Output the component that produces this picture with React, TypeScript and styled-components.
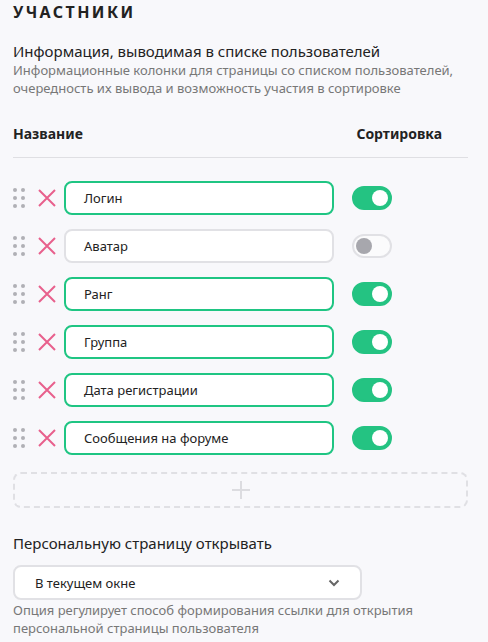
import React, { useState } from 'react'
import styled, { createGlobalStyle } from 'styled-components'

const GlobalStyle = createGlobalStyle`
  html, body {
    margin: 0;
    padding: 0;
    background: #f8f8fb;
  }
  body {
    font-family: "Noto Sans", "Open Sans", sans-serif;
    color: #222;
  }
`

type Field = { name: string; sortable: boolean }

const initialFields: Field[] = [
  { name: 'Логин', sortable: true },
  { name: 'Аватар', sortable: false },
  { name: 'Ранг', sortable: true },
  { name: 'Группа', sortable: true },
  { name: 'Дата регистрации', sortable: true },
  { name: 'Сообщения на форуме', sortable: true },
]

export default function App() {
  const [fields, setFields] = useState(initialFields)

  const toggle = (i: number) =>
    setFields(f => f.map((x, j) => (j === i ? { ...x, sortable: !x.sortable } : x)))

  return (
    <>
      <GlobalStyle />
      <Page>
        <Title>Участники</Title>

        <SectionTitle>Информация, выводимая в списке пользователей</SectionTitle>
        <Hint>
          Информационные колонки для страницы со списком пользователей,
          <br />
          очередность их вывода и возможность участия в сортировке
        </Hint>

        <TableHead>
          <span>Название</span>
          <span>Сортировка</span>
        </TableHead>

        <Rows>
          {fields.map((f, i) => (
            <Row key={f.name}>
              <Handle>
                {Array.from({ length: 6 }).map((_, k) => (
                  <Dot key={k} />
                ))}
              </Handle>
              <RemoveButton aria-label="Удалить">
                <svg width="20" height="20" viewBox="0 0 20 20">
                  <path d="M2 2 L18 18 M18 2 L2 18" stroke="#e8608c" strokeWidth="2" />
                </svg>
              </RemoveButton>
              <NameBox $active={f.sortable}>{f.name}</NameBox>
              <Switch $on={f.sortable} onClick={() => toggle(i)}>
                <Knob $on={f.sortable} />
              </Switch>
            </Row>
          ))}
        </Rows>

        <AddButton aria-label="Добавить">
          <svg width="20" height="20" viewBox="0 0 20 20">
            <path d="M10 1 V19 M1 10 H19" stroke="#dcdce0" strokeWidth="2" />
          </svg>
        </AddButton>

        <Label>Персональную страницу открывать</Label>
        <Select>
          <span>В текущем окне</span>
          <svg width="12" height="8" viewBox="0 0 12 8">
            <path d="M1.5 1.5 L6 6 L10.5 1.5" stroke="#666" strokeWidth="2" fill="none" />
          </svg>
        </Select>
        <Help>
          Опция регулирует способ формирования ссылки для открытия
          <br />
          персональной страницы пользователя
        </Help>
      </Page>
    </>
  )
}

const Page = styled.div`
  width: 455px;
  padding: 0 20px 0 13px;
`

const Title = styled.div`
  font-size: 16px;
  font-weight: 700;
  text-transform: uppercase;
  letter-spacing: 2.4px;
  line-height: 24px;
  color: #222;
`

const SectionTitle = styled.div`
  margin-top: 17px;
  font-size: 15px;
  line-height: 20px;
  color: #222;
`

const Hint = styled.div`
  font-size: 13px;
  line-height: 18px;
  color: #777;
`

const TableHead = styled.div`
  display: flex;
  justify-content: space-between;
  margin-top: 27px;
  padding-bottom: 13px;
  padding-right: 26px;
  border-bottom: 1px solid #dfdfe3;
  font-size: 14px;
  font-weight: 700;
  line-height: 20px;
`

const Rows = styled.div`
  display: flex;
  flex-direction: column;
  gap: 14px;
  margin-top: 23px;
`

const Row = styled.div`
  display: flex;
  align-items: center;
  height: 34px;
`

const Handle = styled.div`
  display: grid;
  grid-template-columns: 4px 4px;
  gap: 4px 4px;
  width: 12px;
  cursor: grab;
`

const Dot = styled.span`
  width: 4px;
  height: 4px;
  border-radius: 50%;
  background: #b0b0b5;
`

const RemoveButton = styled.button`
  display: flex;
  align-items: center;
  justify-content: center;
  background: none;
  border: none;
  padding: 0;
  margin-left: 11px;
  width: 22px;
  height: 22px;
  cursor: pointer;
`

const NameBox = styled.div<{ $active: boolean }>`
  box-sizing: border-box;
  display: flex;
  align-items: center;
  margin-left: 6px;
  width: 270px;
  height: 34px;
  padding: 0 18px;
  background: #fff;
  border: 2px solid ${p => (p.$active ? '#1fc583' : '#e1e1e5')};
  border-radius: 8px;
  font-size: 13px;
  color: #222;
`

const Switch = styled.div<{ $on: boolean }>`
  box-sizing: border-box;
  display: flex;
  align-items: center;
  justify-content: ${p => (p.$on ? 'flex-end' : 'flex-start')};
  margin-left: 18px;
  width: 40px;
  height: 24px;
  padding: 0 2px;
  border-radius: 12px;
  background: ${p => (p.$on ? '#24c382' : '#fbfbfc')};
  border: 2px solid ${p => (p.$on ? '#24c382' : '#e1e1e5')};
  cursor: pointer;
`

const Knob = styled.span<{ $on: boolean }>`
  width: 16px;
  height: 16px;
  border-radius: 50%;
  background: ${p => (p.$on ? '#fff' : '#a7a7ad')};
`

const AddButton = styled.button`
  box-sizing: border-box;
  display: flex;
  align-items: center;
  justify-content: center;
  width: 100%;
  height: 36px;
  margin-top: 17px;
  background: none;
  border: 2px dashed #e0e0e4;
  border-radius: 8px;
  cursor: pointer;
`

const Label = styled.div`
  margin-top: 25px;
  font-size: 15px;
  line-height: 20px;
  color: #222;
`

const Select = styled.div`
  box-sizing: border-box;
  display: flex;
  align-items: center;
  justify-content: space-between;
  margin-top: 12px;
  width: 349px;
  height: 35px;
  padding: 0 20px;
  background: #fff;
  border: 2px solid #e1e1e5;
  border-radius: 8px;
  font-size: 13px;
  color: #222;
`

const Help = styled.div`
  margin-top: 1px;
  font-size: 13px;
  line-height: 18px;
  color: #777;
`
